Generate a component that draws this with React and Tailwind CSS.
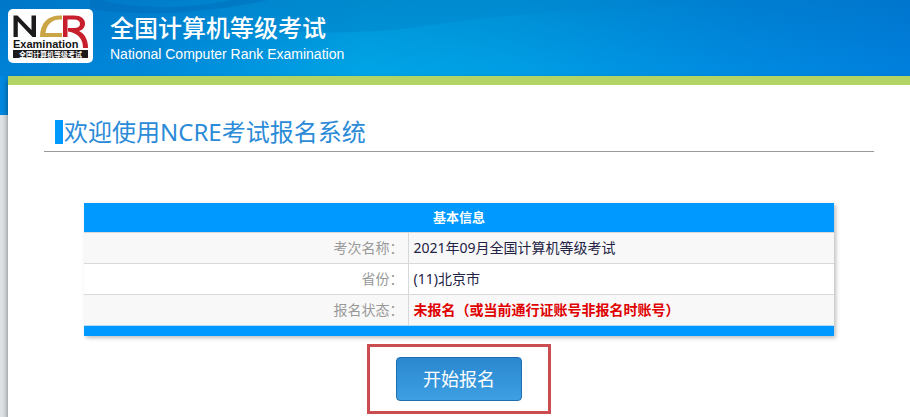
const rows = [
  { label: "考次名称：", value: "2021年09月全国计算机等级考试" },
  { label: "省份：", value: "(11)北京市" },
  { label: "报名状态：", value: "未报名（或当前通行证账号非报名时账号）", alert: true },
];

function NcreLogo() {
  return (
    <svg viewBox="0 0 85 54" className="h-[54px] w-[85px] shrink-0" role="img" aria-label="NCR Examination">
      <rect width="85" height="54" rx="5" fill="#fff" />
      <path d="M5.500 28V6.500H9.500L23.500 21V6.500H28V28H24.500L9.800 12.500V28Z" fill="#1c1a1b" />
      <path
        d="M32 28C32 14 40 6.500 52 6.500H54V10.500H52C44 10.500 39 15 37.500 24H54V28Z"
        fill="#c9a545"
      />
      <path
        d="M55 6.500H66C73 6.500 77 10 77 14.500C77 18.500 74.500 21 71 22C77 25 80 31 80 39H75C75 30 70 24 60 22.500V19H66C70 19 72 17.500 72 15C72 12 70 10.500 66 10.500H59.500V28H55Z"
        fill="#c71f2b"
      />
      <text x="5" y="39" fontSize="11" fontWeight="700" fill="#151515" className="font-['Liberation_Sans',sans-serif]">
        Examination
      </text>
      <rect x="5" y="41" width="75" height="8" fill="#1c1a1b" />
      <text x="11" y="48" fontSize="7" fontWeight="700" fill="#fff" className="font-['Noto_Sans_CJK_SC',sans-serif]">
        全国计算机等级考试
      </text>
    </svg>
  );
}

function HeaderWaves() {
  return (
    <svg
      viewBox="0 0 910 76"
      preserveAspectRatio="none"
      className="absolute inset-0 h-full w-full"
      aria-hidden="true"
    >
      <defs>
        <linearGradient id="sky" x1="0" x2="1" y1="0" y2="0">
          <stop offset="0" stopColor="#0082d8" />
          <stop offset="0.15" stopColor="#0088da" />
          <stop offset="0.4" stopColor="#00a6e8" />
          <stop offset="0.55" stopColor="#00a0e6" />
          <stop offset="0.8" stopColor="#008ce2" />
          <stop offset="1" stopColor="#0080de" />
        </linearGradient>
        <linearGradient id="shade" x1="0" x2="0" y1="0" y2="1">
          <stop offset="0" stopColor="#004f92" stopOpacity="0.22" />
          <stop offset="1" stopColor="#004f92" stopOpacity="0" />
        </linearGradient>
        <linearGradient id="wave" x1="0" x2="1" y1="0" y2="0">
          <stop offset="0" stopColor="#0074bc" stopOpacity="0" />
          <stop offset="0.3" stopColor="#0074bc" stopOpacity="0.3" />
          <stop offset="1" stopColor="#0074bc" stopOpacity="0" />
        </linearGradient>
      </defs>
      <rect width="910" height="76" fill="url(#sky)" />
      <rect width="910" height="76" fill="url(#shade)" />
      <path d="M200 0V26C280 34 360 35 420 27C490 15 560 11 680 8V0Z" fill="url(#wave)" />
      <path d="M90 0V9C150 18 215 12 268 0H230C190 9 140 10 100 0Z" fill="#005fae" fillOpacity="0.3" />
    </svg>
  );
}

export default function App() {
  return (
    <div className="flex min-h-screen flex-col bg-[linear-gradient(#0089df_115px,#e0e4e7_115px)] font-['Noto_Sans','Noto_Sans_CJK_SC',sans-serif]">
      <header className="relative h-[76px]">
        <HeaderWaves />
        <div className="relative flex items-start pt-[9px] pl-2 text-white">
          <NcreLogo />
          <div className="pt-[3px] pl-[17px]">
            <h1 className="text-2xl leading-8 font-medium">全国计算机等级考试</h1>
            <p className="font-['Liberation_Sans',sans-serif] text-sm">National Computer Rank Examination</p>
          </div>
        </div>
      </header>

      <main className="relative ml-2 flex-1 border-t-[9px] border-[#b2d464] bg-white px-9 pt-8 shadow-[0_4px_6px_rgba(0,0,0,0.5)]">
        <h2 className="flex items-center border-b border-[#999] pb-1 pl-[11px] text-2xl leading-[30px] text-[#2b8bd8]">
          <span className="mr-px h-6 w-2 bg-[#0099ff]" />
          欢迎使用NCRE考试报名系统
        </h2>

        <div className="mx-10 mt-[51px] shadow-[2px_2px_4px_rgba(0,0,0,0.25)]">
          <table className="w-full table-fixed border-collapse text-sm">
            <colgroup>
              <col className="w-[324px]" />
              <col />
            </colgroup>
            <thead>
              <tr className="h-[29px] bg-[#0099ff] text-[13px] text-white">
                <th colSpan={2}>基本信息</th>
              </tr>
            </thead>
            <tbody>
              {rows.map((row) => (
                <tr key={row.label} className="h-[31px] border-t border-[#d6d9dc] odd:bg-[#f8f8f8] even:bg-white">
                  <th scope="row" className="border-r border-[#d6d9dc] pr-1 text-right font-normal text-[#999]">
                    {row.label}
                  </th>
                  <td className={row.alert ? "pl-[5px] font-bold text-[#e00000]" : "pl-[5px] text-[#222244]"}>
                    {row.value}
                  </td>
                </tr>
              ))}
            </tbody>
            <tfoot>
              <tr className="h-[11px] border-t border-[#b8dcf8] bg-[#0099ff]">
                <td colSpan={2} />
              </tr>
            </tfoot>
          </table>
        </div>

        <div className="mx-auto mt-2 flex w-fit border-3 border-[#cb4d4f] px-[26px] py-[10px]">
          <button
            type="button"
            className="h-11 rounded border border-[#1f6fb0] bg-linear-to-b from-[#2a88d0] to-[#3e9fe2] px-[26px] text-lg text-white"
          >
            开始报名
          </button>
        </div>
      </main>
    </div>
  );
}
